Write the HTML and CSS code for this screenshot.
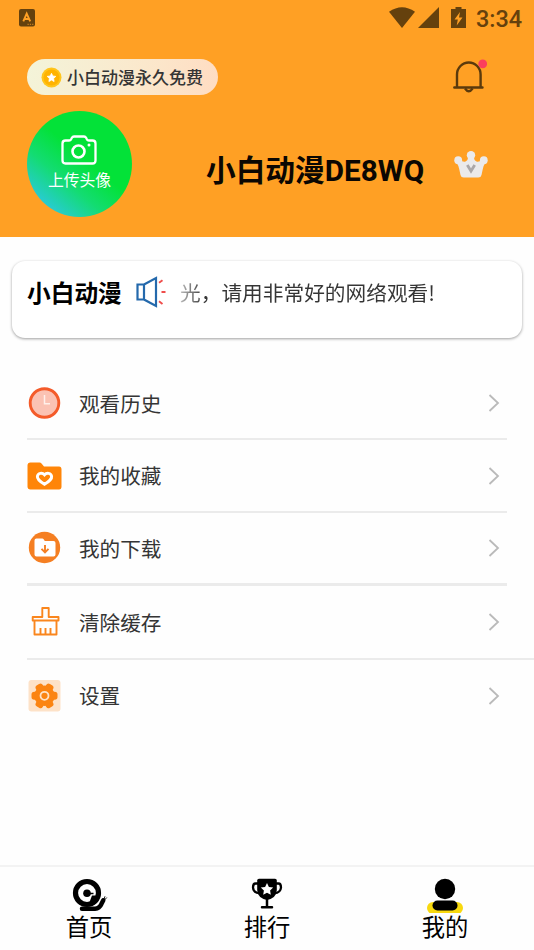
FILE: index.html
```html
<!DOCTYPE html>
<html lang="zh-CN">
<head>
<meta charset="utf-8">
<title>我的</title>
<link rel="stylesheet" href="styles.css">
</head>
<body>
<div class="app">
  <header class="header">
    <div class="status">
      <svg class="status-app" width="16" height="18" viewBox="0 0 16 18"><rect width="16" height="17.5" rx="2" fill="#65410d"/><path d="M4.3 12.3 7.7 4.5l3.5 7.8M5.600 10h4.300" fill="none" stroke="#ffa024" stroke-width="1.900"/><path d="M8.500 15.300h6" stroke="#d98a22" stroke-width="1" stroke-dasharray="1.3 1"/></svg>
      <div class="status-right">
        <svg width="26" height="21" viewBox="0 0 26 21"><path d="M0 4.800Q13-4.500 26 4.800L13 21z" fill="#65410d"/></svg>
        <svg class="signal" width="21" height="21" viewBox="0 0 21 21"><path d="M21 0v21H0z" fill="#65410d"/></svg>
        <svg class="battery" width="15" height="21" viewBox="0 0 15 21"><path d="M4.500 0h6v2H15v19H0V2h4.500z" fill="#65410d"/><path d="M9 5 3.500 12.500h3.300L5.700 18.500l5.800-8H8z" fill="#ffa024"/></svg>
        <span class="clock">3:34</span>
      </div>
    </div>
    <div class="promo-row">
      <div class="pill">
        <svg width="21" height="21" viewBox="0 0 21 21"><circle cx="10.500" cy="10.500" r="10" fill="#ffc51c"/><circle cx="10.500" cy="10.500" r="8" fill="#ffb300"/><path d="m10.500 6.300 1.300 2.700 3 .4-2.200 2.100.5 3-2.600-1.400-2.600 1.400.5-3-2.200-2.100 3-.4z" fill="#fff" stroke="#fff" stroke-width=".8" stroke-linejoin="round"/></svg>
        <span>小白动漫永久免费</span>
      </div>
      <svg class="bell" width="36" height="36" viewBox="0 0 36 36"><path d="M6 28.500V15.500a11.800 12 0 0 1 23.600 0v13M3.300 28.500h28.200" fill="none" stroke="#5b3a0c" stroke-width="2.400" stroke-linecap="round"/><path d="M14 29.500q3.800 5.500 7.600 0" fill="none" stroke="#5b3a0c" stroke-width="2.300"/><circle cx="31.700" cy="4.900" r="4.400" fill="#fb3f5c"/></svg>
    </div>
    <div class="profile">
      <div class="avatar">
        <svg width="36" height="31" viewBox="0 0 36 31"><path d="M4.500 5.500h3.600q1.300 0 2-1.200l.8-1.500q.7-1.300 2.100-1.300h10q1.400 0 2.100 1.300l.8 1.500q.7 1.200 2 1.200h3.600q3 0 3 3v17q0 3-3 3h-27q-3 0-3-3v-17q0-3 3-3z" fill="none" stroke="#fff" stroke-width="2.300"/><circle cx="17.500" cy="16.500" r="6" fill="none" stroke="#fff" stroke-width="2.600"/><circle cx="28" cy="10" r="1.500" fill="#fff"/></svg>
        <span>上传头像</span>
      </div>
      <h1 class="name">小白动漫DE8WQ</h1>
      <svg class="crown" width="34" height="28" viewBox="0 0 34 28"><g fill="#ebeaeb"><circle cx="17" cy="4.300" r="4.200"/><circle cx="4.200" cy="9.200" r="3.900"/><circle cx="29.800" cy="9.200" r="3.900"/><path d="M6 8.500Q9 11.500 11.500 10.500 14 9.500 14 6h6q0 3.500 2.500 4.500 2.500 1 5.500-2l3 4q-1.800 2.500-2.200 5.500L27.500 24q-.5 2.500-3.200 2.500H9.700Q7 26.500 6.500 24l-1.300-6Q4.800 15 3 12.500z"/></g><path d="m13.300 14 3.700 6 3.700-6" fill="none" stroke="#aaa7a9" stroke-width="2.800"/></svg>
    </div>
  </header>

  <section class="notice">
    <strong>小白动漫</strong>
    <svg width="31" height="32" viewBox="0 0 31 32"><g fill="none" stroke="#2469ac" stroke-width="2.200"><path d="M1.500 8.500H8v15H1.500zM8 8.500 20 2v28L8 23.500z"/></g><path d="m23 6.700 3.500-2.500M25.500 16h4M23 25.300l3.500 2.700" fill="none" stroke="#ef4d4b" stroke-width="1.900"/></svg>
    <p class="ticker">光，请用非常好的网络观看!</p>
  </section>

  <main class="menu">
    <a class="item">
      <svg class="icon" width="36" height="34" viewBox="0 0 36 34"><circle cx="17.500" cy="17" r="14.300" fill="#fbc2b3" stroke="#f45b2a" stroke-width="2.900"/><path d="M17.500 9v8.700H23" fill="none" stroke="#fff0ea" stroke-width="1.500"/></svg>
      <span>观看历史</span>
      <svg class="chevron" width="12" height="20" viewBox="0 0 12 20"><path d="m1.500 2 8.500 8-8.500 8" /></svg>
    </a>
    <a class="item">
      <svg class="icon" width="36" height="34" viewBox="0 0 36 34"><path d="M3.500 3.500h9q1.300 0 2 1l2.500 3h15q2.500 0 2.500 3v17q0 3-2.500 3H3.500q-3 0-3-3v-21q0-3 3-3z" fill="#ff8508"/><path d="M17.500 25.200c-3.800-2.200-7.500-4.600-7.100-7.800.5-3.500 4.900-4 7.100-1.600 2.200-2.400 6.600-1.900 7.100 1.600.4 3.200-3.300 5.600-7.100 7.800z" fill="none" stroke="#fff" stroke-width="3"/></svg>
      <span>我的收藏</span>
      <svg class="chevron" width="12" height="20" viewBox="0 0 12 20"><path d="m1.500 2 8.500 8-8.500 8" /></svg>
    </a>
    <a class="item thick">
      <svg class="icon" width="36" height="34" viewBox="0 0 36 34"><circle cx="17.500" cy="16.500" r="15.700" fill="#f57f22"/><path d="M9.500 7.500h5.700q1 0 1.600 1l1 1.500h8.700q2 0 2 2v11.500q0 2-2 2h-17q-2 0-2-2v-14q0-2 2-2z" fill="#fff"/><path d="M18 14v7M14.500 17.800l3.500 3.500 3.500-3.500" fill="none" stroke="#f57f22" stroke-width="1.900"/></svg>
      <span>我的下载</span>
      <svg class="chevron" width="12" height="20" viewBox="0 0 12 20"><path d="m1.500 2 8.500 8-8.500 8" /></svg>
    </a>
    <a class="item wide">
      <svg class="icon" width="36" height="34" viewBox="0 0 36 34"><path d="M15.300 12V3h6.400v9H31.500v3.500H5.700V12zM7.500 15.500v14h22v-14M13.500 29V23M18.500 29V23M23.500 29V23" fill="none" stroke="#fa861d" stroke-width="1.900" stroke-linejoin="round"/></svg>
      <span>清除缓存</span>
      <svg class="chevron" width="12" height="20" viewBox="0 0 12 20"><path d="m1.500 2 8.500 8-8.500 8" /></svg>
    </a>
    <a class="item last">
      <svg class="icon" width="36" height="34" viewBox="0 0 36 34"><rect x="1.500" y="1" width="32" height="31.500" rx="3" fill="#fde2c8"/><g fill="#fb8412"><circle cx="17.500" cy="16.800" r="10.200"/><rect x="4.500" y="12.800" width="26" height="8" rx="2.800"/><rect x="4.500" y="12.800" width="26" height="8" rx="2.800" transform="rotate(60 17.500 16.800)"/><rect x="4.500" y="12.800" width="26" height="8" rx="2.800" transform="rotate(120 17.500 16.800)"/></g><circle cx="17.500" cy="16.800" r="4" fill="none" stroke="#fde2c8" stroke-width="1.800"/></svg>
      <span>设置</span>
      <svg class="chevron" width="12" height="20" viewBox="0 0 12 20"><path d="m1.500 2 8.500 8-8.500 8" /></svg>
    </a>
  </main>

  <nav class="tabs">
    <a class="tab">
      <svg width="38" height="36" viewBox="0 0 38 36"><circle cx="17" cy="16" r="11.500" fill="none" stroke="#000" stroke-width="5.200"/><circle cx="17" cy="16.300" r="3.800"/><path d="M18 16.500h5.500" fill="none" stroke="#000" stroke-width="1.500"/><path d="M22 18.500h6.500l-1 6-5.500 4.500-3-2.500z"/><path d="M12 31.800h13q4.500-.3 6.500-5l1.800-3.500" fill="none" stroke="#000" stroke-width="4.500" stroke-linecap="round" stroke-linejoin="round"/><path d="m34 22 1-2.700M35 22.500l1.800-2" stroke="#000" fill="none" stroke-width=".9"/></svg>
      <span>首页</span>
    </a>
    <a class="tab">
      <svg width="38" height="36" viewBox="0 0 38 36"><path d="M9.200 3.500Q9.200 1.800 11 1.800h16q1.800 0 1.800 1.700V13q-.3 8-9.800 10-9.500-2-9.800-10z"/><path d="M10 6.500H7.500q-2.500 0-2.500 4Q5.500 16 11.500 16M28 6.500h2.500q2.500 0 2.500 4Q32.500 16 26.500 16" fill="none" stroke="#000" stroke-width="2.300"/><path d="M19 22v8M14 30.200h10" fill="none" stroke="#000" stroke-width="2.500" stroke-linecap="round"/><path d="m19 6 1.900 3.900 4.300.6-3.100 3 .7 4.200-3.800-2-3.800 2 .7-4.200-3.100-3 4.300-.6z" fill="#fff"/></svg>
      <span>排行</span>
    </a>
    <a class="tab">
      <svg width="38" height="36" viewBox="0 0 38 36"><rect x="1" y="25" width="36" height="12" rx="6" fill="#f8d90f"/><circle cx="19" cy="12" r="10.200"/><rect x="6.500" y="23.500" width="25" height="10" rx="5"/></svg>
      <span>我的</span>
    </a>
  </nav>
</div>
</body>
</html>
```
FILE: styles.css
```css
* { box-sizing: border-box; }
html, body { height: 950px; overflow: hidden; }
body {
  margin: 0;
  background: #fefefe;
  color: #353535;
  font-family: "Noto Sans CJK SC", sans-serif;
}
svg { display: block; flex: none; }
.app {
  display: flex;
  flex-direction: column;
  width: 534px;
  height: 950px;
  overflow: hidden;
}
.header {
  height: 237px;
  flex: none;
  background: #ffa024;
}
.status {
  display: flex;
  justify-content: space-between;
  height: 59px;
  padding: 7px 12px 0 19px;
}
.status-app { margin-top: 2px; }
.status-right { display: flex; }
.signal { margin-left: 3px; }
.battery { margin-left: 12px; }
.clock {
  width: 46px;
  margin-left: 10px;
  color: #65410d;
  font: 500 23.400px/24px Roboto, sans-serif;
  white-space: nowrap;
}
.promo-row {
  display: flex;
  justify-content: space-between;
  padding: 0 47px 0 27px;
}
.pill {
  display: flex;
  align-items: center;
  gap: 5px;
  width: 191px;
  height: 36px;
  padding-left: 14px;
  border-radius: 18px;
  background: linear-gradient(100deg, #f3f4d9, #fbe8cc 60%, #ffdcc2);
  font-size: 17px;
  font-weight: 500;
  line-height: 34px;
  white-space: nowrap;
}
.profile {
  display: flex;
  padding: 16px 46px 0 27px;
}
.avatar {
  display: flex;
  flex-direction: column;
  align-items: center;
  width: 105px;
  height: 106px;
  padding-top: 24px;
  border-radius: 50%;
  background: linear-gradient(40deg, #2cc8e5 10%, #13dc72 35%, #03e238 55%, #03e238);
  color: #fff;
  font-size: 15.800px;
  line-height: 24px;
}
.avatar svg { margin-left: -1px; }
.avatar span { margin-top: 2px; }
.name {
  width: 222px;
  margin: 40px 0 0 74px;
  color: #0b0702;
  font: 700 29.700px/40px Roboto, "Noto Sans CJK SC", sans-serif;
  white-space: nowrap;
}
.crown { margin: 40px 0 0 26px; }
.notice {
  display: flex;
  flex: none;
  height: 77px;
  margin: 24px 12px 0;
  padding: 15px 15px 0;
  border-radius: 13px;
  background: #fff;
  box-shadow: 0 1px 3px rgba(0, 0, 0, .38);
}
.notice strong {
  width: 95px;
  margin-right: 14px;
  color: #000;
  font-size: 23.700px;
  line-height: 32px;
  white-space: nowrap;
}
.ticker {
  margin: 0 0 0 13px;
  font-size: 20.700px;
  line-height: 32px;
  white-space: nowrap;
  background: linear-gradient(90deg, #bbb, #353535 24px);
  -webkit-background-clip: text;
  background-clip: text;
  color: transparent;
}
.menu {
  flex: 1;
  padding: 30px 0 0 27px;
}
.item {
  display: flex;
  align-items: center;
  height: 73px;
  margin-right: 27px;
  padding-right: 7px;
  border-bottom: 2px solid #ebebeb;
  font-size: 20.600px;
  line-height: 30px;
}
.item:first-child { height: 72px; }
.item span { margin: -1px 0 0 16px; }
.thick { border-bottom-width: 3px; }
.wide { height: 74px; margin-right: 0; padding-right: 34px; }
.last { height: 71px; border-bottom: 0; }
.chevron { margin-left: auto; fill: none; stroke: #bababa; stroke-width: 1.800; }
.tabs {
  display: flex;
  flex: none;
  height: 85px;
  border-top: 2px solid #f3f3f3;
  background: #fefefe;
}
.tab {
  display: flex;
  flex: 1;
  flex-direction: column;
  align-items: center;
  padding-top: 10px;
  color: #000;
  font-size: 23.300px;
  line-height: 26px;
}
```
